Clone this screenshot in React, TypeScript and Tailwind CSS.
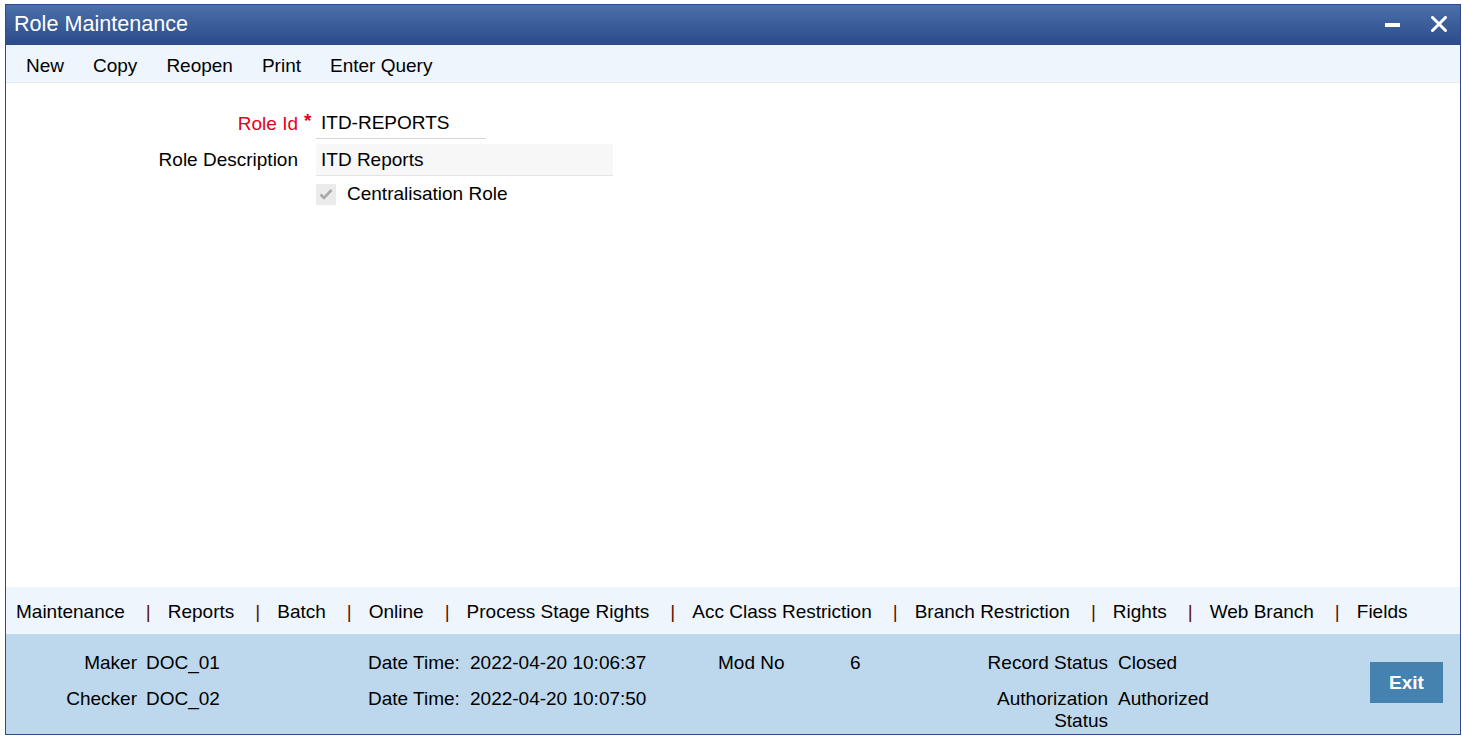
import React from "react";

const font = { fontFamily: '"Liberation Sans", Arial, sans-serif' };

const toolbarItems = ["New", "Copy", "Reopen", "Print", "Enter Query"];
const tabs = [
  "Maintenance",
  "Reports",
  "Batch",
  "Online",
  "Process Stage Rights",
  "Acc Class Restriction",
  "Branch Restriction",
  "Rights",
  "Web Branch",
  "Fields",
];

function TitleBar() {
  return (
    <div className="flex h-[40px] items-center justify-between bg-gradient-to-b from-[#4b70aa] to-[#2b4b8a] pl-[8px] pr-[13px]">
      <span className="pb-[3px] text-[21.6px] leading-none text-white">Role Maintenance</span>
      <div className="flex items-center gap-[31px]">
        <span className="block h-[4px] w-[15px] bg-white" />
        <svg width="16" height="16" viewBox="0 0 16 16" className="mb-[2px]">
          <path d="M1.5 1.5 L14.5 14.5 M14.5 1.5 L1.5 14.5" stroke="white" strokeWidth="3" strokeLinecap="square" />
        </svg>
      </div>
    </div>
  );
}

function Toolbar() {
  return (
    <div className="flex h-[38px] items-center gap-[29px] border-b border-[#e6ebf0] bg-[#eef5fd] pl-[20px] pt-[5px] text-[19px] text-black">
      {toolbarItems.map((t) => (
        <span key={t}>{t}</span>
      ))}
    </div>
  );
}

function Form() {
  return (
    <div className="flex-1 bg-white pt-[26px] text-[19px] text-black">
      <div className="grid grid-cols-[292px_18px_auto] items-center">
        <div className="text-right text-[#e8001c]">Role Id</div>
        <div className="self-start pl-[6px] pt-[2px] text-[19px] font-bold leading-none text-[#e8001c]">*</div>
        <div className="flex h-[30px] w-[170px] items-center border-b border-[#d6d6d6] pl-[5px]">ITD-REPORTS</div>
      </div>
      <div className="mt-[5px] grid grid-cols-[292px_18px_auto] items-center">
        <div className="text-right">Role Description</div>
        <div />
        <div className="flex h-[32px] w-[297px] items-center border-b border-[#e4e4e4] bg-[#f7f7f7] pl-[5px] pt-[1px]">
          ITD Reports
        </div>
      </div>
      <div className="mt-[4px] grid grid-cols-[292px_18px_auto] items-center">
        <div />
        <div />
        <div className="flex items-center gap-[11px]">
          <span className="flex h-[21px] w-[20px] items-center justify-center bg-[#ebebeb]">
            <svg width="14" height="12" viewBox="0 0 14 12">
              <polyline points="1.5,6.5 5,10 12.5,2" fill="none" stroke="#a9a9a9" strokeWidth="2.6" />
            </svg>
          </span>
          <span>Centralisation Role</span>
        </div>
      </div>
    </div>
  );
}

function TabBar() {
  return (
    <div className="flex h-[47px] items-center bg-[#eef5fd] pl-[10px] pt-[3px] text-[19px] text-black">
      {tabs.map((t, i) => (
        <React.Fragment key={t}>
          <span>{t}</span>
          {i < tabs.length - 1 && <span className="ml-[21px] mr-[17px] text-[#5a1000]">|</span>}
        </React.Fragment>
      ))}
    </div>
  );
}

function Footer() {
  return (
    <div className="flex h-[100px] bg-[#bdd8ec] text-[19px] leading-[22px] text-black">
      <div className="grid grid-cols-[131px_231px_102px_248px_132px_132px_126px_auto] content-start gap-y-[14px] pt-[18px]">
        <div className="text-right">Maker</div>
        <div className="pl-[9px]">DOC_01</div>
        <div>Date Time:</div>
        <div>2022-04-20 10:06:37</div>
        <div>Mod No</div>
        <div>6</div>
        <div className="text-right">Record Status</div>
        <div className="pl-[10px]">Closed</div>

        <div className="text-right">Checker</div>
        <div className="pl-[9px]">DOC_02</div>
        <div>Date Time:</div>
        <div>2022-04-20 10:07:50</div>
        <div />
        <div />
        <div className="text-right">Authorization Status</div>
        <div className="pl-[10px]">Authorized</div>
      </div>
      <div className="ml-auto mr-[17px] mt-[28px]">
        <button className="flex h-[41px] w-[73px] items-center justify-center bg-[#4682b0] text-[19px] font-bold text-white">
          Exit
        </button>
      </div>
    </div>
  );
}

export default function App() {
  return (
    <div className="h-[737px] w-[1462px] bg-white pl-[5px] pt-[4px]" style={font}>
      <div className="flex h-[731px] w-[1456px] flex-col border border-[#2c4c88]">
        <TitleBar />
        <Toolbar />
        <Form />
        <TabBar />
        <Footer />
      </div>
    </div>
  );
}
